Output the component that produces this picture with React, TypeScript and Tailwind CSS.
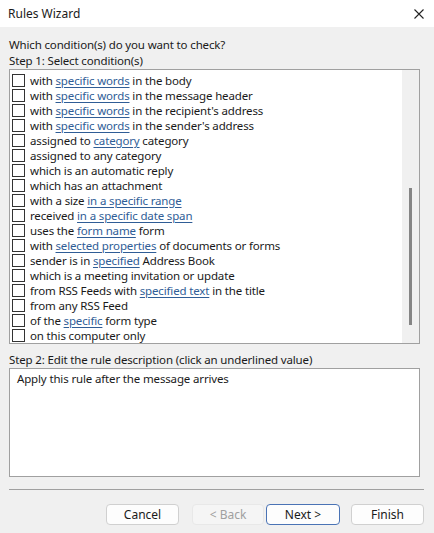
import React from "react";

type Part = string | { link: string };

const rows: Part[][] = [
  ["with ", { link: "specific words" }, " in the body"],
  ["with ", { link: "specific words" }, " in the message header"],
  ["with ", { link: "specific words" }, " in the recipient's address"],
  ["with ", { link: "specific words" }, " in the sender's address"],
  ["assigned to ", { link: "category" }, " category"],
  ["assigned to any category"],
  ["which is an automatic reply"],
  ["which has an attachment"],
  ["with a size ", { link: "in a specific range" }],
  ["received ", { link: "in a specific date span" }],
  ["uses the ", { link: "form name" }, " form"],
  ["with ", { link: "selected properties" }, " of documents or forms"],
  ["sender is in ", { link: "specified" }, " Address Book"],
  ["which is a meeting invitation or update"],
  ["from RSS Feeds with ", { link: "specified text" }, " in the title"],
  ["from any RSS Feed"],
  ["of the ", { link: "specific" }, " form type"],
  ["on this computer only"],
];

export default function App() {
  return (
    <div
      className="w-[434px] h-[533px] bg-[#f0f0f0] text-[11.5px] tracking-[-0.15px] text-[#1a1a1a] overflow-hidden"
      style={{ fontFamily: '"Noto Sans", "Open Sans", sans-serif' }}
    >
      <div className="h-[27px] bg-white flex items-center justify-between pl-[8px] pr-[10px]">
        <span className="leading-none text-[12px] tracking-normal">Rules Wizard</span>
        <svg width="10" height="10" viewBox="0 0 10 10" className="mt-[1px]">
          <path d="M0.5 0.5 L9.5 9.5 M9.5 0.5 L0.5 9.5" stroke="#222" strokeWidth="1.1" />
        </svg>
      </div>
      <div className="px-[9px] pt-[10px]">
        <div className="h-[16px] leading-[16px]">Which condition(s) do you want to check?</div>
        <div className="h-[16px] leading-[16px]">Step 1: Select condition(s)</div>
        <div className="w-[411px] h-[275px] border border-[#a0a0a0] bg-white flex">
          <div className="flex-1 pt-[3px] pl-[2px]">
            {rows.map((r, i) => (
              <div key={i} className="h-[15px] flex items-center">
                <div className="w-[13px] h-[13px] border border-[#333] bg-white shrink-0" />
                <div className="ml-[5px] whitespace-nowrap leading-[14px]">
                  {r.map((p, j) =>
                    typeof p === "string" ? (
                      <span key={j} className="whitespace-pre">{p}</span>
                    ) : (
                      <span key={j} className="text-[#2f5d96] underline underline-offset-[2px] decoration-[1px]">
                        {p.link}
                      </span>
                    )
                  )}
                </div>
              </div>
            ))}
          </div>
          <div className="w-[17px] bg-[#f0f0f0] flex justify-center pt-[118px]">
            <div className="w-[3px] h-[137px] bg-[#858585] ml-[-1px]" />
          </div>
        </div>
        <div className="h-[24px] leading-[16px] pt-[8px]">Step 2: Edit the rule description (click an underlined value)</div>
        <div className="w-[411px] h-[109px] border border-[#a0a0a0] bg-white px-[7px] pt-[2px] leading-[16px]">
          Apply this rule after the message arrives
        </div>
        <div className="mt-[12px] w-[415px] h-px bg-[#a0a0a0]" />
        <div className="mt-[14px] flex items-center tracking-normal">
          <button className="ml-[97px] w-[73px] h-[21px] rounded-[4px] border border-[#d0d0d0] bg-[#fdfdfd] text-[12px] leading-none">
            Cancel
          </button>
          <button className="ml-[13px] w-[72px] h-[21px] rounded-[4px] border border-[#e8e8e8] bg-[#f5f5f5] text-[#a0a0a0] text-[12px] leading-none">
            &lt; Back
          </button>
          <button className="ml-[2px] w-[74px] h-[21px] rounded-[4px] border border-[#4a73b5] bg-[#fdfdfd] text-[12px] leading-none">
            Next &gt;
          </button>
          <button className="ml-[11px] w-[73px] h-[21px] rounded-[4px] border border-[#d0d0d0] bg-[#fdfdfd] text-[12px] leading-none">
            Finish
          </button>
        </div>
      </div>
    </div>
  );
}
